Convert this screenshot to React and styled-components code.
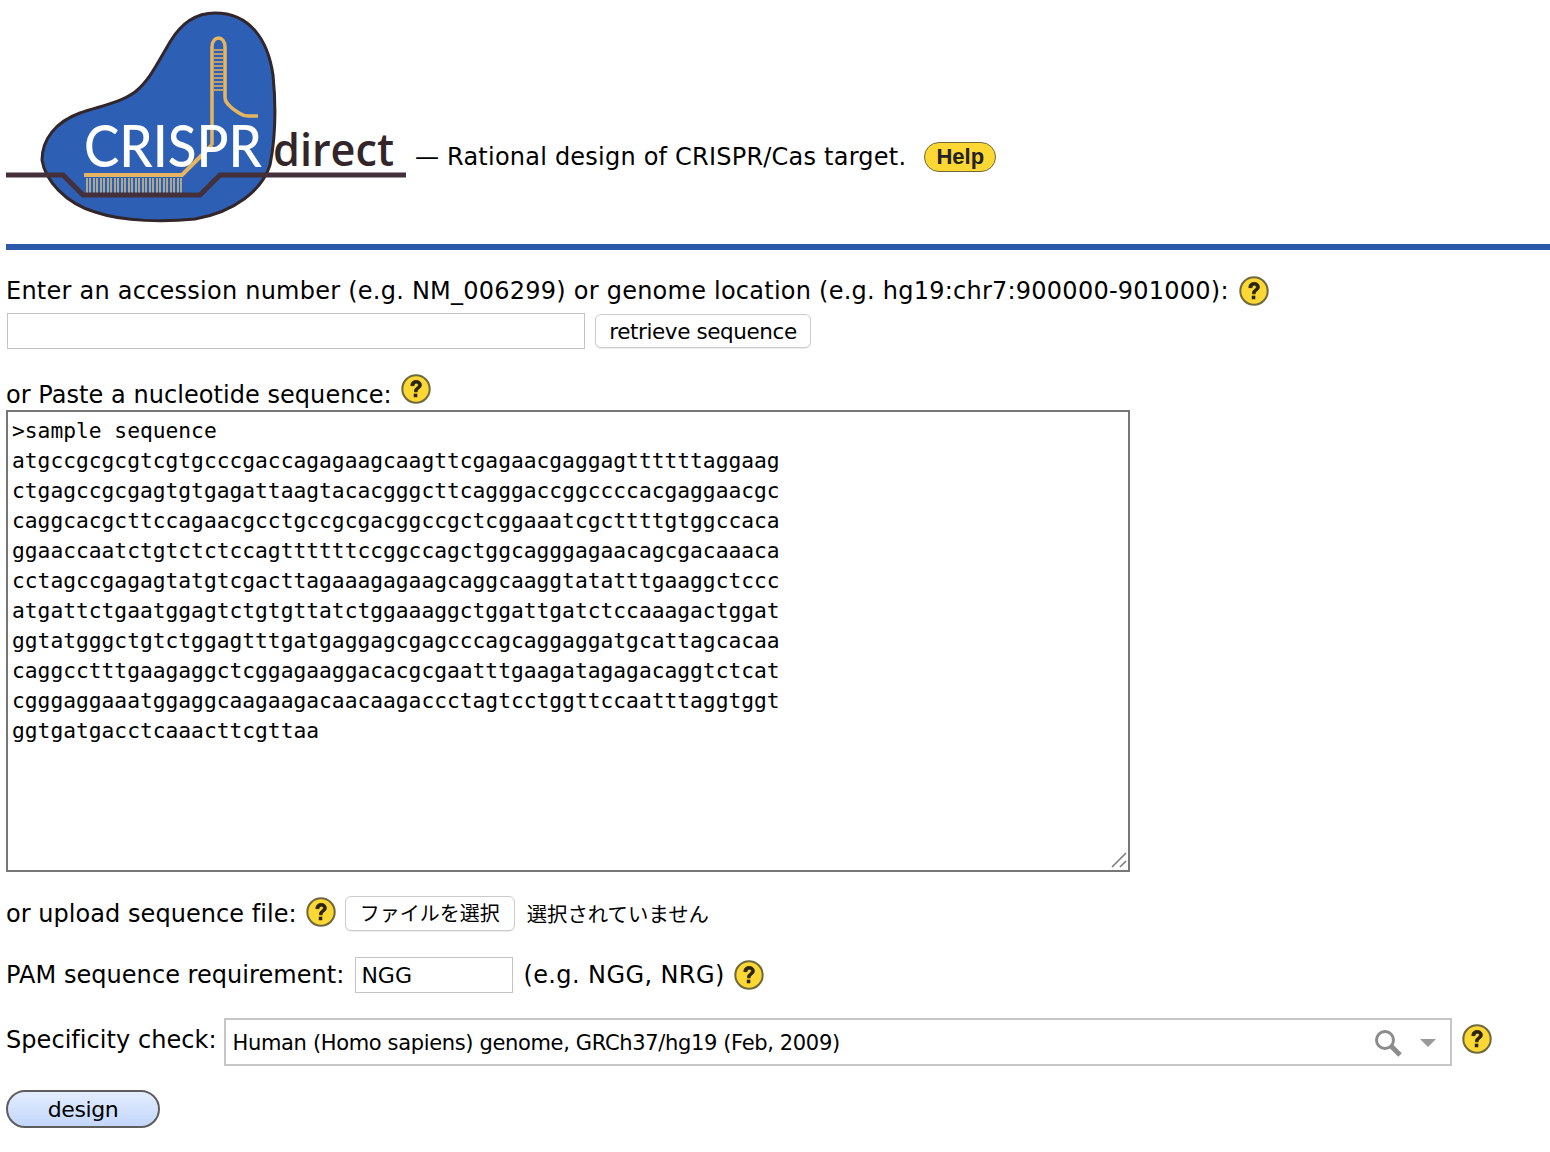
import styled, { createGlobalStyle } from "styled-components"

const sequence = `>sample sequence
atgccgcgcgtcgtgcccgaccagagaagcaagttcgagaacgaggagttttttaggaag
ctgagccgcgagtgtgagattaagtacacgggcttcagggaccggccccacgaggaacgc
caggcacgcttccagaacgcctgccgcgacggccgctcggaaatcgcttttgtggccaca
ggaaccaatctgtctctccagttttttccggccagctggcagggagaacagcgacaaaca
cctagccgagagtatgtcgacttagaaagagaagcaggcaaggtatatttgaaggctccc
atgattctgaatggagtctgtgttatctggaaaggctggattgatctccaaagactggat
ggtatgggctgtctggagtttgatgaggagcgagcccagcaggaggatgcattagcacaa
caggcctttgaagaggctcggagaaggacacgcgaatttgaagatagagacaggtctcat
cgggaggaaatggaggcaagaagacaacaagaccctagtcctggttccaatttaggtggt
ggtgatgacctcaaacttcgttaa`

const Global = createGlobalStyle`
  html, body {
    margin: 0;
    background: #fff;
  }
  body {
    padding: 0 0 0 6px;
    font-family: "DejaVu Sans", sans-serif;
    font-size: 24px;
    color: #000;
    overflow-x: hidden;
  }
`
const Page = styled.div`
  height: 1152px;
  box-sizing: border-box;
`
const Header = styled.div`
  display: flex;
  align-items: flex-start;
  height: 244px;
`
const Tagline = styled.div`
  margin: 142px 0 0 9px;
  display: flex;
  align-items: center;
  height: 30px;
  letter-spacing: 0.22px;
`
const HelpBadge = styled.span`
  margin-left: 18px;
  width: 72px;
  height: 30px;
  box-sizing: border-box;
  border: 1.5px solid #6f6a3c;
  border-radius: 15px;
  background: #fdd835;
  font-family: "Liberation Sans", sans-serif;
  font-weight: 700;
  font-size: 22px;
  letter-spacing: 0;
  display: flex;
  align-items: center;
  justify-content: center;
  color: #222;
`
const Rule = styled.div`
  height: 6px;
  background: #2b58a8;
`
const Row = styled.div`
  display: flex;
  align-items: center;
  height: ${(p) => p.$h}px;
  margin-top: ${(p) => p.$top}px;
  letter-spacing: ${(p) => p.$ls || 0.05}px;
`
const Hint = styled.span`
  margin-left: 10px;
  letter-spacing: 0.4px;
`
const SelectLabel = styled.span`
  margin-bottom: 4px;
`
const HelpIcon = styled.svg`
  width: 30px;
  height: 30px;
  flex: none;
  margin-left: ${(p) => p.$left ?? 10}px;
  position: relative;
  top: ${(p) => p.$up || 0}px;
`
const TextInput = styled.input`
  box-sizing: border-box;
  width: ${(p) => p.$w}px;
  height: 36px;
  margin-left: ${(p) => p.$left || 0}px;
  border: 1px solid #c4c4c4;
  border-radius: 0;
  padding: 0 5px;
  outline: none;
  font: 22px "DejaVu Sans", sans-serif;
  color: #000;
`
const Button = styled.button`
  box-sizing: border-box;
  width: ${(p) => p.$w}px;
  height: ${(p) => p.$h || 34}px;
  margin-left: ${(p) => p.$left || 0}px;
  background: #fff;
  border: 1px solid #ccc;
  border-radius: 6px;
  box-shadow: 0 1px 1px rgba(0, 0, 0, 0.08);
  padding: 0;
  font: 21.5px "DejaVu Sans", sans-serif;
  letter-spacing: -0.4px;
  color: #000;
`
const FileButton = styled(Button)`
  align-self: flex-start;
  padding-bottom: 2px;
  font: 20px "Noto Sans CJK JP", sans-serif;
  letter-spacing: 0;
`
const NoFile = styled.span`
  margin: 0 0 3px 12px;
  font: 20.4px "Noto Sans CJK JP", sans-serif;
  letter-spacing: 0;
`
const SequenceBox = styled.div`
  position: relative;
  width: 1124px;
  height: 462px;
`
const Sequence = styled.textarea`
  display: block;
  box-sizing: border-box;
  width: 100%;
  height: 100%;
  margin: 0;
  border: 2px solid #777;
  border-radius: 0;
  padding: 4px 4px;
  outline: none;
  resize: none;
  font: 21.25px/30px "DejaVu Sans Mono", monospace;
  color: #000;
  overflow: hidden;
  white-space: pre;
`
const Grip = styled.svg`
  position: absolute;
  right: 3px;
  bottom: 4px;
  width: 16px;
  height: 16px;
`
const Select = styled.div`
  box-sizing: border-box;
  width: 1228px;
  height: 48px;
  margin-left: 7px;
  border: 2px solid #c6c6c6;
  padding: 2px 14px 0 7px;
  display: flex;
  align-items: center;
  font-size: 21px;
  letter-spacing: -0.35px;
`
const SelectText = styled.span`
  flex: 1;
`
const Caret = styled.span`
  margin-left: 16px;
  width: 0;
  height: 0;
  border-left: 8px solid transparent;
  border-right: 8px solid transparent;
  border-top: 8px solid #9a9a9a;
`
const DesignButton = styled.button`
  display: block;
  box-sizing: border-box;
  width: 154px;
  height: 38px;
  margin-top: 24px;
  border: 2px solid #5e5e5e;
  border-radius: 19px;
  background: linear-gradient(#e4edff, #c3d7fb);
  padding: 0;
  font: 22px "DejaVu Sans", sans-serif;
  letter-spacing: -0.4px;
  color: #000;
`

const Help = ({ up, left }) => (
  <HelpIcon $up={up} $left={left} viewBox="0 0 32 32">
    <circle cx="16" cy="16" r="14.6" fill="#fdd835" stroke="#6f6a3c" strokeWidth="2.2" />
    <path
      d="M10.500 12.400c0-3.600 2.400-5.600 5.700-5.600s5.500 2 5.500 4.800c0 2.200-1.200 3.300-2.700 4.400-1.300.9-1.700 1.500-1.700 3h-3c0-2.500.8-3.700 2.400-4.900 1.200-.9 1.800-1.500 1.800-2.400 0-1.200-.9-1.900-2.200-1.900-1.500 0-2.300 1-2.400 2.600z"
      fill="#2a2512"
      stroke="#2a2512"
      strokeWidth="0.9"
    />
    <rect x="13.600" y="21" width="3.800" height="3.800" fill="#2a2512" />
  </HelpIcon>
)

const Logo = () => (
  <svg width="400" height="230" viewBox="0 0 400 230" style={{ flex: "none" }}>
    <path
      d="M209 13C244 13 262 40 267 75c3 30 3 60-3 90-8 25-35 47-75 54-30 3-70 3-100-7-30-9-50-32-53-52 0-20 13-38 38-47 20-7 40-10 55-21 15-12 23-30 35-50 10-17 25-29 45-29z"
      fill="#2d60b5"
      stroke="#33262a"
      strokeWidth="3"
    />
    <g fill="none" stroke="#e7b55f" strokeWidth="3.500">
      <path d="M206 145V47c0-12 13-12 13 0v50c0 6 4 8 8 12l6 4c3 2 6 3 9 3h10" />
      <path d="M206 145l-30 30H78" strokeWidth="4" />
      <path d="M208 50h9M208 54h9M208 58h9M208 62h9M208 66h9M208 70h9M208 74h9M208 78h9M208 82h9M208 86h9M208 90h9" strokeWidth="1.500" />
      <path
        d="M81 178v15M84 178v15M88 178v15M91 178v15M95 178v15M98 178v15M102 178v15M105 178v15M109 178v15M112 178v15M116 178v15M119 178v15M123 178v15M126 178v15M130 178v15M133 178v15M137 178v15M140 178v15M144 178v15M147 178v15M151 178v15M154 178v15M158 178v15M161 178v15M165 178v15M168 178v15M172 178v15M175 178v15"
        stroke="#b9b08c"
        strokeWidth="1.800"
      />
    </g>
    <text x="78" y="167" fill="#fff" fontFamily="Lato, sans-serif" fontWeight="500" fontSize="58" textLength="178" lengthAdjust="spacingAndGlyphs">
      CRISPR
    </text>
    <text x="267" y="166" fill="#33262a" fontFamily="Open Sans, sans-serif" fontWeight="600" fontSize="46" textLength="121" lengthAdjust="spacingAndGlyphs">
      direct
    </text>
    <path d="M0 175h57l20 20h117l20-20h186" fill="none" stroke="#43303a" strokeWidth="5" />
  </svg>
)

const App = () => {
  return (
    <Page>
      <Global />
      <Header>
        <Logo />
        <Tagline>
          — Rational design of CRISPR/Cas target.
          <HelpBadge>Help</HelpBadge>
        </Tagline>
      </Header>
      <Rule />
      <Row $h={30} $top={26} $ls={0.24}>
        Enter an accession number (e.g. NM_006299) or genome location (e.g. hg19:chr7:900000-901000):
        <Help />
      </Row>
      <Row $h={36} $top={7}>
        <TextInput $w={578} $left={1} />
        <Button $w={216} $left={10}>retrieve sequence</Button>
      </Row>
      <Row $h={30} $top={31}>
        or Paste a nucleotide sequence:
        <Help up={-6} left={9} />
      </Row>
      <SequenceBox>
        <Sequence defaultValue={sequence} spellCheck={false} />
        <Grip viewBox="0 0 16 16">
          <path d="M1 15L15 1M9 15l6-6" stroke="#777" strokeWidth="1.500" />
        </Grip>
      </SequenceBox>
      <Row $h={36} $top={24}>
        or upload sequence file:
        <Help up={-2} left={9} />
        <FileButton $w={170} $h={35} $left={9}>ファイルを選択</FileButton>
        <NoFile>選択されていません</NoFile>
      </Row>
      <Row $h={36} $top={25}>
        PAM sequence requirement:
        <TextInput $w={158} $left={11} defaultValue="NGG" />
        <Hint>(e.g. NGG, NRG)</Hint>
        <Help left={9} />
      </Row>
      <Row $h={48} $top={25}>
        <SelectLabel>Specificity check:</SelectLabel>
        <Select>
          <SelectText>Human (Homo sapiens) genome, GRCh37/hg19 (Feb, 2009)</SelectText>
          <svg width="30" height="30" viewBox="0 0 30 30">
            <circle cx="11" cy="12" r="8.500" fill="none" stroke="#8c8c8c" strokeWidth="3" />
            <path d="M17 18l9 9" stroke="#8c8c8c" strokeWidth="5" />
          </svg>
          <Caret />
        </Select>
        <Help up={-3} />
      </Row>
      <DesignButton>design</DesignButton>
    </Page>
  )
}

export default App
